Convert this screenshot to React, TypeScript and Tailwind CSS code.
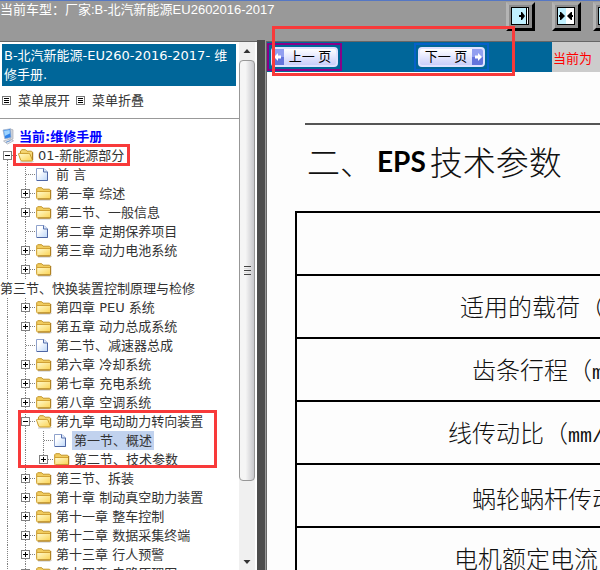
import React from "react";

/**TYPES */
type TreeNode = {
  label: string;
  depth: number;
  kind: "folder" | "open" | "page";
  toggle?: "plus" | "minus";
  last?: boolean;
  selected?: boolean;
  broken?: boolean;
};

/**DATA */
const NODES: TreeNode[] = [
  { label: "01-新能源部分", depth: 0, kind: "open", toggle: "minus" },
  { label: "前 言", depth: 1, kind: "page" },
  { label: "第一章 综述", depth: 1, kind: "folder", toggle: "plus" },
  { label: "第二节、一般信息", depth: 1, kind: "folder", toggle: "plus" },
  { label: "第二章 定期保养项目", depth: 1, kind: "page" },
  { label: "第三章 动力电池系统", depth: 1, kind: "folder", toggle: "plus" },
  { label: "第三节、快换装置控制原理与检修", depth: 1, kind: "folder", toggle: "plus", broken: true },
  { label: "第四章 PEU 系统", depth: 1, kind: "folder", toggle: "plus" },
  { label: "第五章 动力总成系统", depth: 1, kind: "folder", toggle: "plus" },
  { label: "第二节、减速器总成", depth: 1, kind: "page" },
  { label: "第六章 冷却系统", depth: 1, kind: "folder", toggle: "plus" },
  { label: "第七章 充电系统", depth: 1, kind: "folder", toggle: "plus" },
  { label: "第八章 空调系统", depth: 1, kind: "folder", toggle: "plus" },
  { label: "第九章 电动助力转向装置", depth: 1, kind: "open", toggle: "minus" },
  { label: "第一节、概述", depth: 2, kind: "page", selected: true },
  { label: "第二节、技术参数", depth: 2, kind: "folder", toggle: "plus", last: true },
  { label: "第三节、拆装", depth: 1, kind: "folder", toggle: "plus" },
  { label: "第十章 制动真空助力装置", depth: 1, kind: "folder", toggle: "plus" },
  { label: "第十一章 整车控制", depth: 1, kind: "folder", toggle: "plus" },
  { label: "第十二章 数据采集终端", depth: 1, kind: "folder", toggle: "plus" },
  { label: "第十三章 行人预警", depth: 1, kind: "folder", toggle: "plus" },
  { label: "第十四章 电路原理图", depth: 1, kind: "folder", toggle: "plus" },
];

const PARAMS = [
  { name: "", unit: "" },
  { name: "适用的载荷", unit: "kg" },
  { name: "齿条行程", unit: "mm" },
  { name: "线传动比", unit: "mm/rev" },
  { name: "蜗轮蜗杆传动比", unit: "" },
  { name: "电机额定电流", unit: "A" },
];

/**ICONS */
const FolderIcon: React.FC<{ open?: boolean }> = ({ open }) => (
  <svg width="18" height="19" viewBox="0 0 18 19" className="shrink-0" aria-hidden="true">
    <defs>
      <linearGradient id="folderFill" x1="0" y1="0" x2="1" y2="1">
        <stop offset="0" stopColor="#fffbd0" />
        <stop offset="1" stopColor="#fbd250" />
      </linearGradient>
    </defs>
    <path d="M2 16h12.500l1-1" stroke="#8a8a8a" strokeWidth="1" fill="none" opacity=".5" />
    {open ? (
      <>
        <path d="M2.500 13V5L4 3.700h3.500L9 5.200h4.500l1 1V14z" fill="#f5d774" stroke="#c3952a" />
        <path d="M.5 8q0-.6.7-.6h9.600q.8 0 1.100.6l2.400 5.800q.4 1.200-.8 1.200H4q-1 0-1.400-1z" fill="url(#folderFill)" stroke="#cb9d2c" />
        <path d="M14.700 6.500v7.500" stroke="#a87b20" />
      </>
    ) : (
      <>
        <path d="M.7 13V4.700l1-1h4l1.300 1.500h6.500l1 1V13z" fill="#f1cc5d" stroke="#c3952a" />
        <path d="M.7 7.500h13.800v6.500q0 1-1 1H1.700q-1 0-1-1z" fill="url(#folderFill)" stroke="#d1a235" />
        <path d="M14.700 6v8.300q0 .7-.9.700H2" stroke="#a87b20" fill="none" />
      </>
    )}
  </svg>
);

const PageIcon: React.FC = () => (
  <svg width="18" height="19" viewBox="0 0 18 19" className="shrink-0" aria-hidden="true">
    <defs>
      <linearGradient id="pageFill" x1="0" y1="0" x2="1" y2="1">
        <stop offset=".3" stopColor="#ffffff" />
        <stop offset="1" stopColor="#bcd6f8" />
      </linearGradient>
    </defs>
    <path d="M.5 3.500h7.500l3.500 3.500v8.500H.5z" fill="url(#pageFill)" stroke="#8fa2cc" />
    <path d="M7.500 3.500V7h4" fill="#dce8fa" stroke="#5770ad" />
    <path d="M11.500 7v8.500H1" stroke="#4e66a4" fill="none" />
  </svg>
);

const ComputerIcon: React.FC = () => (
  <svg width="18" height="19" viewBox="0 0 18 19" className="shrink-0" aria-hidden="true">
    <path d="M10 2l3 .8v9.200l-3 1.500z" fill="#d5d8dd" stroke="#9aa0aa" strokeWidth=".6" />
    <path d="M3 3l7.500-1.200.6 8.700-6.300 1.500z" fill="#2f83ea" stroke="#a9b8cc" strokeWidth=".8" />
    <path d="M4 3.800l5.700-.9.200 3.600-5.200 2.500z" fill="#9ed4ff" />
    <path d="M3.500 14l6.500-2 3.500 1.800-6 3.200z" fill="#e6e9ee" stroke="#a2a8b2" strokeWidth=".7" />
    <path d="M6 15.300l4.500-1.800" stroke="#5b8ed0" />
  </svg>
);

const Joint: React.FC<{ toggle?: "plus" | "minus"; root?: boolean; last?: boolean }> = ({ toggle, root, last }) => (
  <svg width="18" height="19" viewBox="0 0 18 19" className="shrink-0" aria-hidden="true">
    <path
      d={root ? "M7.500 10v9" : last ? "M7.500 0v10" : "M7.500 0v19"}
      stroke="#808080"
      strokeDasharray="1 1"
    />
    <path d="M8 9.500h10" stroke="#808080" strokeDasharray="1 1" />
    {toggle && (
      <>
        <rect x="3.500" y="5.500" width="8" height="8" fill="#fff" stroke="#808080" />
        <path d={toggle === "plus" ? "M5 9.500h5M7.500 7v5" : "M5 9.500h5"} stroke="#000" />
      </>
    )}
  </svg>
);

const Rail: React.FC = () => (
  <svg width="18" height="19" viewBox="0 0 18 19" className="shrink-0" aria-hidden="true">
    <path d="M7.500 0v19" stroke="#808080" strokeDasharray="1 1" />
  </svg>
);

const ListIcon: React.FC = () => (
  <svg width="9" height="9" viewBox="0 0 9 9" className="shrink-0" aria-hidden="true">
    <rect x=".5" y=".5" width="8" height="8" fill="#fff" stroke="#777" />
    <path d="M2 2.500h5M2 4.500h5M2 6.500h5" stroke="#000" />
  </svg>
);

const PaneIcon: React.FC<{ variant: "right" | "split" }> = ({ variant }) => (
  <svg width="18" height="18" viewBox="0 0 18 18" aria-hidden="true">
    <rect x=".5" y=".5" width="17" height="17" fill="#c0f0ff" stroke="#000" />
    {variant === "right" ? (
      <>
        <path d="M15 1h2v16h-2z" fill="#fff" />
        <path d="M15.500 1v16" stroke="#000" />
        <path d="M8 8h2V5h1l3 4-3 4h-1v-3H8z" fill="#000" />
      </>
    ) : (
      <>
        <path d="M9 1h8v16H9z" fill="#fff" />
        <path d="M2 8h1V5h1l4 4-4 4H3v-3H2zM16 8h-1V5h-1l-4 4 4 4h1v-3h1z" fill="#000" />
      </>
    )}
  </svg>
);

const PagerArrow: React.FC<{ back?: boolean }> = ({ back }) => (
  <svg width="11" height="16" viewBox="0 0 11 16" className="shrink-0" aria-hidden="true">
    <path d="M0 0h11v16H0z" fill="#929ff0" />
    <path d="M0 8h11v8H0z" fill="#6474dc" />
    <path d={back ? "M1 8l4-4v2.500h3v3H5V12z" : "M10 8L6 4v2.500H3v3h3V12z"} fill="#fff" />
  </svg>
);

/**COMPONENTS */
const ToolButton: React.FC<{ label: string; variant: "right" | "split" }> = ({ label, variant }) => (
  <button
    type="button"
    aria-label={label}
    className="shrink-0 border-3 border-t-[#a8a8a8] border-l-[#b4b4b4] border-r-black border-b-black bg-[#8c8c8c] pt-0.5 pr-[3px] pb-[3px] pl-0.5"
  >
    <PaneIcon variant={variant} />
  </button>
);

const TreeRow: React.FC<{ node: TreeNode }> = ({ node }) => (
  <li>
    <div className="flex h-[19px] items-center whitespace-nowrap">
      {Array.from({ length: node.depth }, (_, i) => (
        <Rail key={i} />
      ))}
      <Joint toggle={node.toggle} root={node.depth === 0} last={node.last} />
      {node.kind === "page" ? <PageIcon /> : <FolderIcon open={node.kind === "open"} />}
      {!node.broken && (
        <a href="#doc" className={node.selected ? "bg-[#c1d2ee] px-0.5" : "px-0.5"}>
          {node.label}
        </a>
      )}
    </div>
    {node.broken && (
      <a href="#doc" className="block h-[19px] whitespace-nowrap">
        {node.label}
      </a>
    )}
  </li>
);

const Sidebar: React.FC = () => (
  <aside className="flex w-[257px] shrink-0 border-t border-[#666] bg-white">
    <div className="min-w-0 flex-1 overflow-hidden pt-0.5 text-[13px] leading-[19px] text-[#333] font-['DejaVu_Sans','Noto_Sans_CJK_SC',sans-serif]">
      <h1 className="mr-[3px] ml-0.5 bg-[#069] px-0.5 py-0.5 whitespace-nowrap text-white">
        B-北汽新能源-EU260-2016-2017- 维
        <br />
        修手册.
      </h1>
      <div className="flex h-[33px] items-center border-b border-[#999] px-0.5 pb-1">
        <button type="button" className="flex items-center gap-[7px]">
          <ListIcon />
          菜单展开
        </button>
        <button type="button" className="ml-1.5 flex items-center gap-[7px]">
          <ListIcon />
          菜单折叠
        </button>
      </div>
      <nav className="pt-2">
        <a href="#root" className="flex h-[19px] items-center gap-px font-bold text-[#00f]">
          <ComputerIcon />
          当前:维修手册
        </a>
        <ul>
          {NODES.map((node) => (
            <TreeRow key={node.label} node={node} />
          ))}
        </ul>
      </nav>
    </div>

    {/* Scrollbar */}
    <div className="mr-0.5 flex w-4 shrink-0 flex-col bg-[#f0f0f0]">
      <svg width="16" height="18" viewBox="0 0 16 18" className="shrink-0" aria-hidden="true">
        <path d="M4.500 11L8 7l3.500 4z" fill="#333" />
      </svg>
      <div className="flex grow-0 basis-[421px] items-center justify-center rounded-sm border border-[#979797] bg-linear-to-r from-[#f5f5f5] from-40% to-[#c8c8cc]">
        <div className="flex flex-col gap-px">
          <span className="h-px w-[7px] bg-[#444]" />
          <span className="h-px w-[7px] bg-[#ddd]" />
          <span className="h-px w-[7px] bg-[#444]" />
          <span className="h-px w-[7px] bg-[#ddd]" />
          <span className="h-px w-[7px] bg-[#444]" />
        </div>
      </div>
      <svg width="16" height="16" viewBox="0 0 16 16" className="mt-auto shrink-0" aria-hidden="true">
        <path d="M4.500 6L8 10l3.500-4z" fill="#333" />
      </svg>
    </div>
  </aside>
);

const Pager: React.FC = () => (
  <div className="flex h-[30px] bg-[#069] font-['Liberation_Sans','Noto_Sans_CJK_SC',sans-serif]">
    <div className="flex w-[285px] shrink-0 items-start pt-px">
      <a href="#prev" className="border-2 border-[#808] p-0.5">
        <span className="flex h-5 items-center overflow-hidden rounded-sm border-2 border-[#dfe2ff] bg-linear-to-b from-white to-[#c9cefa] text-[13px] leading-4 text-black">
          <PagerArrow back />
          <span className="w-[52px] text-center whitespace-nowrap">上一 页</span>
        </span>
      </a>
      <a href="#next" className="ml-[72px] border-2 border-[#0660c8] p-0.5">
        <span className="flex h-5 items-center overflow-hidden rounded-sm border-2 border-[#dfe2ff] bg-linear-to-b from-white to-[#c9cefa] text-[13px] leading-4 text-black">
          <span className="w-[52px] text-center whitespace-nowrap">下一 页</span>
          <PagerArrow />
        </span>
      </a>
    </div>
    <label className="flex flex-1 items-center gap-2 bg-[#ccc] pt-1 pl-px text-[13px] whitespace-nowrap text-[#f00]">
      当前为
      <input type="text" className="h-5 w-20 shrink-0 border-2 border-[#777] bg-[#ddd]" />
    </label>
  </div>
);

const Doc: React.FC = () => (
  <article id="doc" className="bg-[#fdfdfd] pt-[51px] pl-7 text-[#111] font-['Noto_Sans_CJK_SC',sans-serif]">
    <div className="ml-[10px] border-t-2 border-[#555] pt-5 pl-0.5">
      <h2 className="flex text-[33px] leading-8 font-light whitespace-nowrap">
        二、
        <span className="mx-1 text-[28px] font-bold text-black font-['Lato',sans-serif]">EPS</span>
        技术参数
      </h2>
    </div>
    <table className="mt-[34px] w-[522px] table-fixed border-collapse">
      <tbody>
        {PARAMS.map((param, i) => (
          <tr key={i}>
            <td className="h-[63px] border-2 border-black pt-1 text-center text-[24px] leading-8 font-light whitespace-nowrap">
              {param.name}
              {param.unit && (
                <>
                  （<span className="text-[20px] font-['Liberation_Mono',monospace]">{param.unit}</span>）
                </>
              )}
            </td>
          </tr>
        ))}
      </tbody>
    </table>
  </article>
);

/**TEMPLATE */
const App: React.FC = () => {
  return (
    <div className="relative flex h-screen flex-col overflow-hidden bg-[#999]">
      <header className="flex h-10 shrink-0 items-start overflow-hidden border-t border-[#5577c4] pt-px">
        <p className="w-[506px] shrink-0 text-[13px] leading-4 whitespace-nowrap text-white font-['Liberation_Sans','Noto_Sans_CJK_SC',sans-serif]">
          当前车型：厂家:B-北汽新能源EU2602016-2017
        </p>
        <div className="flex shrink-0 gap-[17px]">
          <ToolButton label="展开目录" variant="right" />
          <ToolButton label="平分窗口" variant="split" />
        </div>
        <div className="ml-3 shrink-0">
          <ToolButton label="收起目录" variant="right" />
        </div>
      </header>

      <div className="flex min-h-0 flex-1">
        <div className="flex pt-px">
          <Sidebar />
        </div>
        <div className="w-2 shrink-0 bg-[#4d4d4d]" />
        <main className="mt-px ml-px min-w-0 flex-1 overflow-hidden border-t border-l border-[#666] bg-[#fdfdfd]">
          <Pager />
          <Doc />
        </main>
      </div>

      {/* Callout frames drawn over the page */}
      <div className="pointer-events-none absolute top-[26px] left-[272px] h-[50px] w-[243px] border-[3px] border-[#f83a3a]" />
      <div className="pointer-events-none absolute top-[144px] left-[13px] h-[22px] w-[117px] border-[3px] border-[#f83a3a]" />
      <div className="pointer-events-none absolute top-[410px] left-[18px] h-[58px] w-[199px] border-[3px] border-[#f83a3a]" />
    </div>
  );
};

export default App;
